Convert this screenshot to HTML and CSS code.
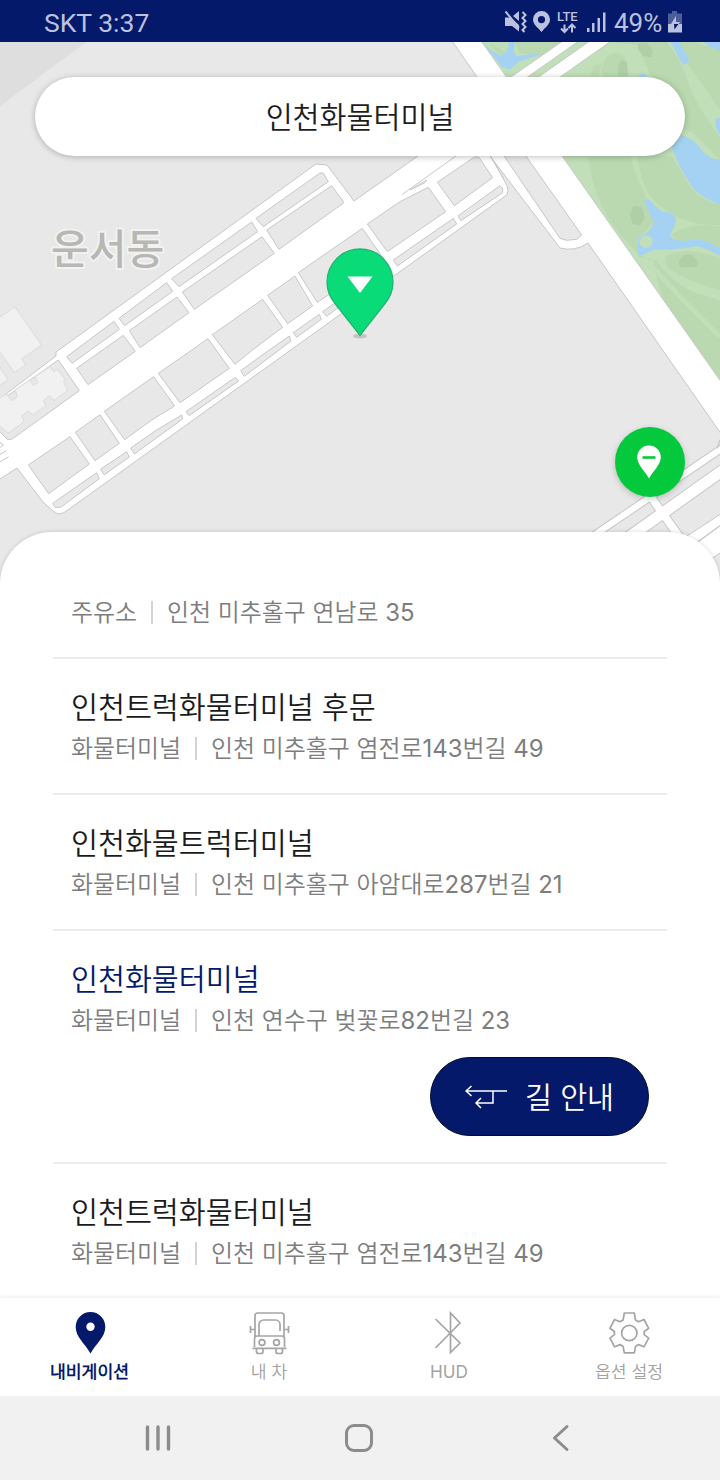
FILE: index.html
```html
<!DOCTYPE html>
<html lang="ko">
<head>
<meta charset="utf-8">
<title>인천화물터미널</title>
<link rel="stylesheet" href="styles.css">
</head>
<body>
<div class="screen">
  <header class="status">
    <span class="status-time">SKT 3:37</span>
    <div class="status-icons">
      <svg class="ic-status" viewBox="0 0 180 42" width="180" height="42">
        <g fill="#bcc2dd">
          <path d="M513 16l6-5v10z" transform="translate(-500 0)"/>
          <path d="M5.500 11.500L19 28" stroke="#bcc2dd" stroke-width="2" fill="none"/>
          <path d="M5 17.500h5.500l8.500 7.500v6.500l-7-5.500H5z"/>
          <path d="M22.500 12l3 3-3 3 3 3-3 3 3 3-3 3 2 2" stroke="#bcc2dd" stroke-width="2" fill="none"/>
          <path fill-rule="evenodd" d="M41.500 11a8.500 8.500 0 0 0-8.500 8.500c0 5 5 8 8.500 12.500 3.500-4.500 8.500-7.500 8.500-12.500a8.500 8.500 0 0 0-8.500-8.500zm0 5a3.600 3.600 0 1 1 0 7.200 3.600 3.600 0 0 1 0-7.200z"/>
          <path d="M64.500 24.500v7M61 28.500l3.500 3.500 3.500-3.500M72 32.500v-7M68.500 28l3.500-3.500 3.500 3.500" stroke="#bcc2dd" stroke-width="2" fill="none"/>
          <path d="M87 28h2.500v4H87zM92 23h2.500v9H92zM97.500 18h2.500v14h-2.500zM103 12.500h2.500V32H103z"/>
          <path d="M172 11h5v2.500h5V24h-14V13.500h4z" opacity=".4"/>
          <path d="M168 24h14v8.500h-14z"/>
          <path d="M176 16l-5 8h4v5l5-7h-4z"/>
          <path d="M174 24h4.500l-4 5.500z" fill="#04196a"/>
        </g>
        <text class="lte" x="57" y="20.500">LTE</text>
        <text class="pct" x="114" y="32">49%</text>
      </svg>
    </div>
  </header>

  <main class="content">
    <div class="map">
      <svg viewBox="0 42 720 548" width="720" height="548">
        <rect y="42" width="720" height="548" fill="#e8e8e8"/>
        <path d="M0 42h86L0 106z" fill="#dedede"/>

        <!-- golf course -->
        <path d="M482 42H720V380L562 156z" fill="#c1dfb9"/>
        <g transform="translate(360 0) scale(.33333)">
          <g fill="#bad9b0">
            <path d="M385 126L450 165 425 166 405 150zM465 126H600L540 168 480 160zM745 126H920Q970 190 985 250 1010 320 1080 410V480L1000 400 900 350 740 250 725 215Q730 160 770 158 810 165 800 230L880 240 830 135zM690 225Q700 185 725 195L715 230zM935 126H1000L1080 150V330Q1040 270 1000 215z"/>
            <path d="M685 468H812Q825 530 850 570L860 600Q880 640 880 670L830 720 835 770 885 780Q850 790 770 690 700 600 685 468zM830 468H935L990 560Q1020 600 1080 615V675Q1000 680 930 640 870 600 850 550zM940 700Q1000 665 1080 680V745Q1030 715 1000 725 950 728 935 705zM890 780Q940 870 1080 900V1190L960 1020Q900 900 880 785z"/>
          </g>
          <path d="M870 790Q930 865 1080 1010" fill="none" stroke="#c1dfb9" stroke-width="14"/>
          <path d="M915 770Q975 735 1080 775V870Q990 850 920 800z" fill="#bad9b0"/>
          <g fill="#afcfa8">
            <path d="M835 130L860 128 878 150 875 172 850 168 835 150zM785 180L800 185 805 228H775Q770 195 785 180zM820 618L845 620 855 655 840 675 818 672 810 645zM970 765L995 763 1015 785 1010 800 960 803 955 785z"/>
          </g>
          <g fill="#a5d2f3">
            <path d="M368 126Q390 155 425 166 445 158 446 126H467Q455 150 470 168L540 160 530 168 475 185 450 210 425 200z"/>
            <path d="M932 126H960L988 185 968 195zM1030 126H1080V152L1050 140zM838 222H855L865 235H838zM1080 352L1066 358 1068 385 1080 405z"/>
            <path d="M935 440L965 405Q1000 415 1030 455 1055 480 1080 478V614Q1020 590 1000 565 960 510 935 440z"/>
            <path fill-rule="evenodd" d="M852 602L865 596Q880 615 905 634L938 640 948 660 940 685 930 708Q950 730 1010 718 1040 720 1080 745V768Q1040 745 1010 738 960 750 880 750L840 768 830 755 834 715Q880 690 880 665zM860 707C840 707 830 730 850 742 875 750 885 722 872 710z"/>
          </g>
        </g>

        <!-- cross road in the north -->
        <g transform="translate(360 0) scale(.33333)" fill="#fff" stroke="#c7c7c7" stroke-width="3">
          <path d="M440 240L607 124H655L490 240zM523 240L688 124H752L588 240z"/>
        </g>

        <!-- runway road network -->
        <g class="road">
          <path d="M-6 403L56 356 56 352 316 164 327 165 354 201 418 156 452 130 491 156 504 180Q512 193 504 197L65 512Q58 516 53 511L43 502 17 468-6 483z"/>
          <path d="M450 38H479L724 386V438L588 243Q575 252 560 248L490 156 470 100 477 77z"/>
        </g>
        <g class="block" transform="translate(0 280) scale(.33333)">
          <path d="M85 555L210 470 268 552 146 641zM226 457L300 404 358 490 285 542zM313 394L461 290 524 378 455 420 374 479zM475 280L624 176 688 265 540 368zM637 164L788 58 848 142 760 208 705 253zM803 46L885-12 938 78 863 131zM895-22L1087-155 1150-65 952 67z"/>
          <path d="M158 670L290 578 298 596 182 682 165 682zM301 568L380 515 388 531 313 584zM392 504L470 450 545 405 548 417 403 522zM558 395L706 292 716 303 567 407zM722 272L780 230 868 168 873 183 733 289zM880 158L958 103 964 118 890 172zM968 95L1080 16 1085 30 980 109z"/>
          <path d="M200 230L342 124 358 148 216 250zM230 265L370 166 406 214 264 314zM357 115L500 8 518 34 374 137zM388 152L531 51 567 98 420 203zM515-4L755-174 773-145 537 20zM547 36L786-130 823-80 583 88zM768-185L960-321 970-321 985-295 790-160zM800-150L995-283 1032-232 837-92z"/>
          <path d="M-5 367L175 240 238 332 35 478 22 478-5 450z"/>
          <path d="M-4 484L10 495-4 505M-4 525L20 512M-4 548L26 530" fill="none"/>
        </g>
        <g transform="translate(0 280) scale(.33333)" fill="#f1f1f1" stroke="#e0e0e0" stroke-width="4">
          <path d="M-5 115L45 80 125 195 66 237 77 255 43 278-5 210zM-5 255L25 300-5 318z"/>
          <path d="M-5 356L20 342 35 362 52 350 45 330 90 300 100 316 113 307 105 290 150 260 162 275 173 267 195 297 192 308 203 332 162 362 148 348 130 362 138 378 98 405 85 393 65 408 72 425 25 460-5 435z"/>
        </g>
        <g class="block" transform="translate(360 0) scale(.33333)">
          <path d="M22 672L120 605 205 562 257 635 82 755zM232 547L345 470 357 472 398 533 283 617zM100 780L280 655 290 672 112 798zM294 648L420 557 428 567 428 578 303 662z"/>
          <path d="M420 450L600 715 620 721 650 718 665 705 485 450z"/>
          <path d="M127 583L295 463M150 570L200 540 195 548zM388 463L430 535" fill="none"/>
        </g>

        <!-- junction in the south-east -->
        <g transform="translate(360 280) scale(.33333)" fill="none">
          <g stroke="#c7c7c7">
            <path d="M690 774L1090 502" stroke-width="25"/>
            <path d="M800 776L1090 570" stroke-width="39"/>
            <path d="M865 640L965 780" stroke-width="29"/>
          </g>
          <g stroke="#fff">
            <path d="M690 774L1090 502" stroke-width="19"/>
            <path d="M800 776L1090 570" stroke-width="33"/>
            <path d="M865 640L965 780" stroke-width="23"/>
          </g>
          <path d="M970 775L1090 697V812L1020 860z" fill="#fff" stroke="#c7c7c7" stroke-width="3"/>
          <path d="M1010 788L1090 730M1080 480L1072 505" stroke="#c7c7c7" stroke-width="4"/>
        </g>

        <text class="district" x="51" y="264">운서동</text>
      </svg>
    </div>

    <div class="search">인천화물터미널</div>

    <svg class="map-pin" viewBox="0 0 80 100" width="80" height="100">
      <ellipse cx="40" cy="91" rx="7" ry="2.500" fill="#c4c4c4"/>
      <path d="M40 3.500A33 33 0 0 0 7 36.500C7 45 10 52 15 58L40 90 65 58C70 52 73 45 73 36.500A33 33 0 0 0 40 3.500z" transform="translate(0 .5)" fill="#0adb79" stroke="#22b573" stroke-width="1.300"/>
      <path d="M27.500 31.500h25L40 48z" fill="#fff"/>
    </svg>

    <div class="locate">
      <svg viewBox="0 0 24 34" width="24" height="34">
        <path d="M12 .5A11.800 11.800 0 0 0 .2 12.300C.2 20 8 26 12 33.500 16 26 23.800 20 23.800 12.300A11.800 11.800 0 0 0 12 .5z" fill="#fff"/>
        <path d="M5.500 12.500h13" stroke="#04c93c" stroke-width="2.600"/>
      </svg>
    </div>

    <section class="sheet">
      <article class="place">
        <div class="meta"><span>주유소</span><i class="bar"></i><span>인천 미추홀구 연남로 35</span></div>
      </article>
      <article class="place">
        <h2 class="name">인천트럭화물터미널 후문</h2>
        <div class="meta"><span>화물터미널</span><i class="bar"></i><span>인천 미추홀구 염전로143번길 49</span></div>
      </article>
      <article class="place">
        <h2 class="name">인천화물트럭터미널</h2>
        <div class="meta"><span>화물터미널</span><i class="bar"></i><span>인천 미추홀구 아암대로287번길 21</span></div>
      </article>
      <article class="place selected">
        <h2 class="name">인천화물터미널</h2>
        <div class="meta"><span>화물터미널</span><i class="bar"></i><span>인천 연수구 벚꽃로82번길 23</span></div>
        <button class="guide">
          <svg viewBox="0 0 42 24" width="42" height="24" fill="none" stroke="#fff" stroke-width="1.500">
            <path d="M1 6h41M6.500 1L1 6l5.500 5M28 6v12H11M16 13l-5 5 5 5"/>
          </svg>
          <span>길 안내</span>
        </button>
      </article>
      <article class="place">
        <h2 class="name">인천트럭화물터미널</h2>
        <div class="meta"><span>화물터미널</span><i class="bar"></i><span>인천 미추홀구 염전로143번길 49</span></div>
      </article>
    </section>
  </main>

  <nav class="tabs">
    <a class="tab active">
      <svg viewBox="0 0 42 44" width="42" height="44"><path fill-rule="evenodd" d="M21.500 1A14.800 14.800 0 0 0 6.700 16C6.700 26 15.500 32 21.500 42.500 27.500 32 36.300 26 36.300 16A14.800 14.800 0 0 0 21.500 1zm0 10.500a4.200 4.200 0 1 1 0 8.400 4.200 4.200 0 0 1 0-8.400z" fill="#04196a"/></svg>
      <span>내비게이션</span>
    </a>
    <a class="tab">
      <svg viewBox="0 0 42 44" width="42" height="44" fill="none" stroke="#a5a5a5" stroke-width="1.700">
        <path d="M7 27V4.500a2.500 2.500 0 0 1 2.500-2.500h24A2.500 2.500 0 0 1 36 4.500V27M11 25V13.500a4.500 4.500 0 0 1 4.500-4.500h12a4.500 4.500 0 0 1 4.500 4.500V20M6.500 36V27.500a2.500 2.500 0 0 1 2.500-2.500h25a2.500 2.500 0 0 1 2.500 2.500V36M4.500 37.300h34M8.500 38v2.500q0 2 2 2h2.500q2 0 2-2V38M28 38v2.500q0 2 2 2h2.500q2 0 2-2V38M2.500 15v7M2.500 18.500H7M40.500 15v7M40.500 18.500H36"/>
        <circle cx="14" cy="31.500" r="2.900"/><circle cx="28.500" cy="31.500" r="2.900"/>
      </svg>
      <span>내 차</span>
    </a>
    <a class="tab">
      <svg viewBox="0 0 42 44" width="42" height="44" fill="none" stroke="#a5a5a5" stroke-width="1.700">
        <path d="M7.500 8L32 32 22.500 41.500V2L32 12 7.500 37"/>
      </svg>
      <span>HUD</span>
    </a>
    <a class="tab">
      <svg viewBox="0 0 42 44" width="42" height="44" fill="none" stroke="#a5a5a5" stroke-width="1.700" stroke-linejoin="round">
        <path d="M16.300 2h10l1.200 7 3.200 1.800L36 8.500l4.700 8.800-4.500 3.200v3.200l4.500 3.500-4.700 8.600-5.500-2.200-3 1.800-1.200 6.500h-10l-1.200-6.500-3-1.800-5.500 2.200L1.900 27.200l4.500-3.500v-3.200l-4.500-3.200L6.600 8.500l5.300 2.300L15.100 9z"/>
        <circle cx="21.300" cy="22" r="7.700"/>
      </svg>
      <span>옵션 설정</span>
    </a>
  </nav>

  <footer class="system">
    <svg viewBox="0 0 28 28" width="28" height="28" stroke-width="3.400"><path d="M3.500 3v22M14 3v22M24.500 3v22"/></svg>
    <svg viewBox="0 0 30 30" width="30" height="30" stroke-width="3"><rect x="2.500" y="2.500" width="25" height="25" rx="7.500"/></svg>
    <svg viewBox="0 0 28 28" width="28" height="28" stroke-width="3"><path d="M21 2.500L8.500 14 21 25.500"/></svg>
  </footer>
</div>
</body>
</html>
```
FILE: styles.css
```css
* { box-sizing: border-box; }
body {
  margin: 0;
  background: #fff;
  font-family: Inter, "Noto Sans CJK KR DemiLight", "Noto Sans CJK KR", sans-serif;
}
.screen {
  display: flex;
  flex-direction: column;
  width: 720px;
  height: 1480px;
  overflow: hidden;
}
.status {
  display: flex;
  justify-content: space-between;
  align-items: center;
  height: 42px;
  flex: none;
  padding: 0 20px 0 44px;
  background: #04196a;
  color: #bcc2dd;
  font-family: Roboto, sans-serif;
}
.status-time { font-size: 26.500px; line-height: 42px; padding-top: 4px; }
.status-icons { width: 200px; }
.ic-status { display: block; overflow: visible; }
.lte { font: 500 13px Roboto, sans-serif; fill: #bcc2dd; }
.pct { font: 26px Roboto, sans-serif; fill: #bcc2dd; }

.content {
  position: relative;
  height: 1256px;
  flex: none;
  overflow: hidden;
}
.map { height: 490px; }
.map svg { display: block; }
.road path { fill: #fff; stroke: #c7c7c7; stroke-width: 1; }
.block path { fill: #e8e8e8; stroke: #c7c7c7; stroke-width: 3; }
.block path[fill="none"] { fill: none; }
.district {
  font: 500 41px "Noto Sans CJK KR", sans-serif;
  fill: #b7b7b3;
  stroke: #f2f2f2;
  stroke-width: 4px;
  paint-order: stroke;
  stroke-linejoin: round;
}
.search {
  position: absolute;
  top: 35px;
  left: 35px;
  width: 650px;
  height: 79px;
  border-radius: 40px;
  background: #fff;
  box-shadow: 0 1px 6px rgba(0, 0, 0, .25);
  color: #1d1d1d;
  font-size: 29.300px;
  line-height: 81px;
  text-align: center;
}
.map-pin { position: absolute; left: 320px; top: 203px; }
.locate {
  position: absolute;
  left: 615px;
  top: 385px;
  display: flex;
  align-items: center;
  justify-content: center;
  width: 70px;
  height: 70px;
  border-radius: 50%;
  background: #04c93c;
  box-shadow: 0 2px 6px rgba(0, 0, 0, .2);
}
.locate svg { margin-right: 2px; }
.sheet {
  position: relative;
  height: 780px;
  padding: 60px 53px 0;
  border-radius: 52px 52px 0 0;
  background: #fff;
  box-shadow: 0 0 4px rgba(0, 0, 0, .16);
}
.place {
  padding: 28px 18px 24px;
  border-bottom: 2px solid #ededed;
}
.place:first-child { padding-top: 1px; }
.place:last-child { border-bottom: 0; }
.name {
  margin: 0;
  color: #1b1b1b;
  font-size: 29.300px;
  font-weight: 400;
  line-height: 42px;
}
.meta {
  display: flex;
  align-items: center;
  height: 40px;
  color: #7d7d7d;
  font-size: 23.930px;
  line-height: 40px;
}
.bar { width: 2px; height: 23px; margin: -2px 14px 0; background: #d3d3d3; }
.selected { padding-bottom: 26px; }
.selected .name { color: #04196a; }
.guide {
  display: flex;
  align-items: center;
  justify-content: center;
  gap: 18px;
  width: 219px;
  height: 79px;
  margin: 16px 0 0 auto;
  padding: 0;
  border: 1px solid #01092c;
  border-radius: 40px;
  background: #04196a;
  color: #fff;
  font: 29.300px/42px Inter, "Noto Sans CJK KR DemiLight", "Noto Sans CJK KR", sans-serif;
}
.guide span { padding-top: 2px; }
.tabs {
  position: relative;
  display: grid;
  grid-template-columns: repeat(4, 180px);
  height: 98px;
  flex: none;
  background: #fff;
  box-shadow: 0 -1px 4px rgba(0, 0, 0, .08);
}
.tab {
  display: flex;
  flex-direction: column;
  align-items: center;
  padding: 13px 2px 0 0;
  color: #a2a2a2;
  font-size: 17.200px;
  line-height: 34px;
}
.active { padding-right: 1px; color: #04196a; font-weight: 700; }
.system {
  position: relative;
  display: grid;
  grid-template-columns: repeat(3, 201px);
  justify-content: center;
  justify-items: center;
  align-items: center;
  height: 84px;
  flex: none;
  padding-right: 2px;
  background: #f1f1f1;
}
.system svg { fill: none; stroke: #8c8c8c; stroke-linecap: round; stroke-linejoin: round; }
```
